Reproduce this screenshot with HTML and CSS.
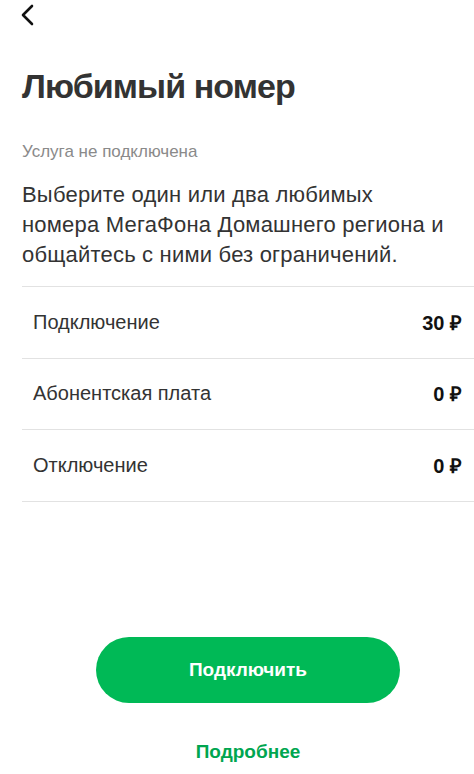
FILE: index.html
```html
<!DOCTYPE html>
<html lang="ru">
<head>
    <meta charset="UTF-8">
    <meta name="viewport" content="width=device-width, initial-scale=1.0">
    <title>Любимый номер</title>
    <link rel="stylesheet" href="styles.css">
</head>
<body>
    <div class="page">
        <header class="topbar">
            <button class="back" aria-label="Назад">
                <svg width="14" height="22" viewBox="0 0 14 22">
                    <path d="M11 2 L2 11 L11 20" fill="none" stroke="#111" stroke-width="2.6" stroke-linecap="round" stroke-linejoin="round"/>
                </svg>
            </button>
        </header>

        <section class="content">
            <h1 class="title">Любимый номер</h1>
            <p class="status">Услуга не подключена</p>
            <p class="description">Выберите один или два любимых номера МегаФона Домашнего региона и общайтесь с ними без ограничений.</p>

            <!-- Prices -->
            <ul class="prices">
                <li class="price-row">
                    <span class="price-label">Подключение</span>
                    <span class="price-value">30 ₽</span>
                </li>
                <li class="price-row">
                    <span class="price-label">Абонентская плата</span>
                    <span class="price-value">0 ₽</span>
                </li>
                <li class="price-row">
                    <span class="price-label">Отключение</span>
                    <span class="price-value">0 ₽</span>
                </li>
            </ul>
        </section>

        <footer class="actions">
            <button class="connect">Подключить</button>
            <a class="more" href="#">Подробнее</a>
        </footer>
    </div>
</body>
</html>
```

FILE: styles.css
```css
body {
    font-family: "Liberation Sans", Arial, sans-serif;
    margin: 0;
    padding: 0;
    background-color: #fff;
    color: #333;
}

.page {
    display: flex;
    flex-direction: column;
    min-height: 774px;
}

.topbar {
    height: 30px;
    padding-left: 21px;
    display: flex;
    align-items: center;
}

.back {
    background: none;
    border: none;
    padding: 0;
    width: 14px;
    height: 22px;
    cursor: pointer;
}

.back svg {
    display: block;
}

.content {
    padding-left: 22px;
}

.title {
    margin: 34px 0 0;
    font-size: 34px;
    line-height: 44px;
    letter-spacing: -0.9px;
    font-weight: bold;
    color: #333;
}

.status {
    margin: 34px 0 0;
    font-size: 17px;
    line-height: 20px;
    color: #8a8a8a;
}

.description {
    margin: 18px 0 0;
    padding-right: 22px;
    font-size: 22px;
    line-height: 30px;
    letter-spacing: 0.2px;
    color: #333;
}

.prices {
    list-style-type: none;
    margin: 16px 0 0;
    padding: 0;
    border-top: 1.5px solid #e2e2e2;
}

.price-row {
    display: flex;
    justify-content: space-between;
    align-items: center;
    height: 70.5px;
    padding: 0 12px 0 11px;
    border-bottom: 1.5px solid #e2e2e2;
    font-size: 20px;
}

.price-label {
    color: #333;
}

.price-value {
    font-weight: bold;
    color: #111;
}

.actions {
    margin-top: auto;
    display: flex;
    flex-direction: column;
    align-items: center;
    padding: 0 0 10px 22px;
}

.connect {
    width: 304px;
    height: 66px;
    border: none;
    border-radius: 33px;
    background-color: #00b956;
    color: #fff;
    font-family: inherit;
    font-size: 19px;
    font-weight: bold;
    cursor: pointer;
}

.more {
    margin-top: 37px;
    font-size: 19px;
    line-height: 24px;
    font-weight: bold;
    color: #00a650;
    text-decoration: none;
}
```
